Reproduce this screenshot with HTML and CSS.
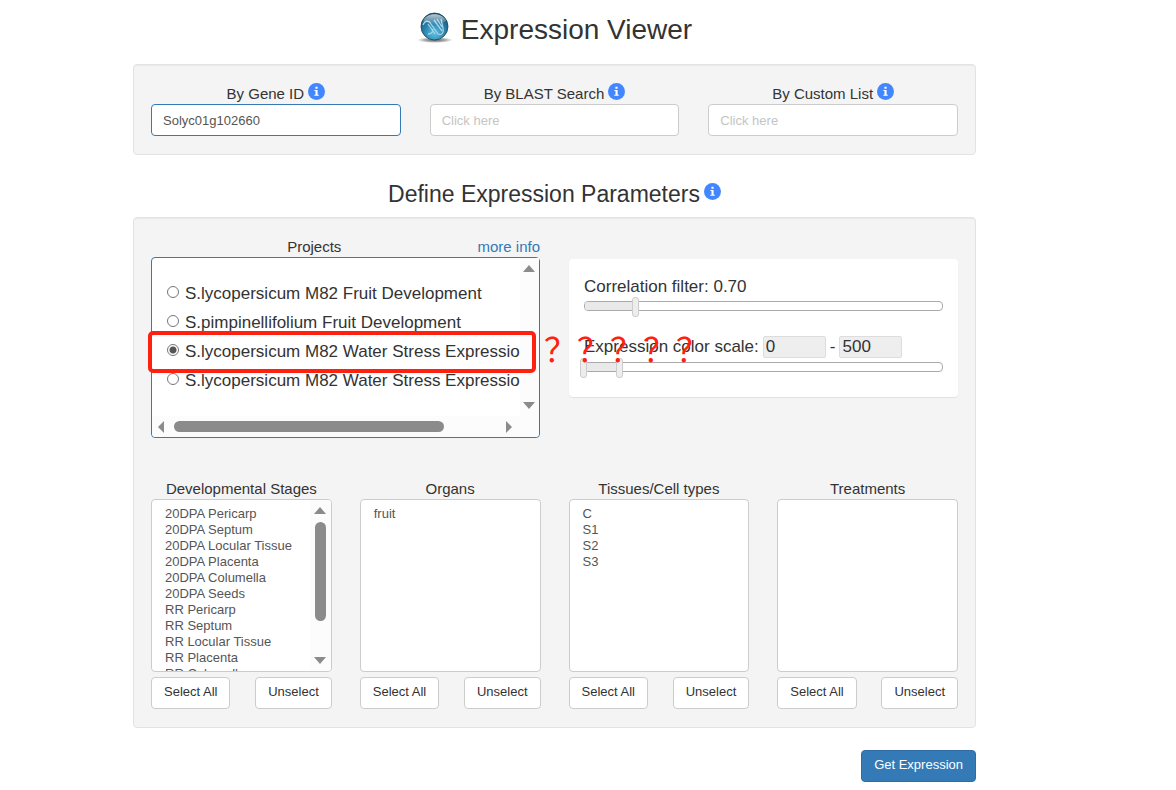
FILE: index.html
```html
<!DOCTYPE html>
<html lang="en">
<head>
<meta charset="utf-8">
<title>Expression Viewer</title>
<link rel="stylesheet" href="styles.css">
</head>
<body>
<svg class="defs" aria-hidden="true">
  <symbol id="info" viewBox="0 0 17 17">
    <circle cx="8.5" cy="8.5" r="8.5" fill="#4287ff"/>
    <path fill="#fff" d="M7.400 3.800h2.200v1.900H7.400zM6.400 7h3.200v4.700h1.200v1H6.300v-1h1.200V8h-1.100z"/>
  </symbol>
</svg>
<main class="page">
  <h1 class="title">
    <svg class="logo" viewBox="0 0 36 32" aria-hidden="true">
      <defs>
        <radialGradient id="ball" cx="50%" cy="75%" r="75%">
          <stop offset="0" stop-color="#5cbfe2"/><stop offset=".5" stop-color="#2c86b0"/><stop offset="1" stop-color="#1a4a66"/>
        </radialGradient>
        <linearGradient id="shine" x1="0" y1="0" x2="0" y2="1">
          <stop offset="0" stop-color="#fff" stop-opacity=".7"/><stop offset="1" stop-color="#fff" stop-opacity=".05"/>
        </linearGradient>
        <radialGradient id="shade"><stop offset="0" stop-color="#444" stop-opacity=".9"/><stop offset=".6" stop-color="#777" stop-opacity=".6"/><stop offset="1" stop-color="#999" stop-opacity="0"/></radialGradient>
      </defs>
      <ellipse cx="18" cy="28" rx="18" ry="3" fill="url(#shade)"/>
      <circle cx="17.500" cy="14.500" r="13.500" fill="url(#ball)" stroke="#17445c" stroke-width=".8"/>
      <path fill="none" stroke="#a5d3e6" stroke-width="1.300" d="M6 13c2-5 6-5 8-1l7 10c4 2 6-2 5-6l-2-9M11 22c4 0 5-2 5-5M11 12l7 10M17 8l8 11M20 7l5 8"/>
      <path fill="url(#shine)" d="M6 9C9 0 26 0 29 9 24 13 11 13 6 9z"/>
    </svg>
    <span>Expression Viewer</span>
  </h1>

  <form class="form">
    <section class="panel search">
      <div class="field">
        <div class="caption"><label for="gene">By Gene ID</label><svg class="info"><use href="#info"/></svg></div>
        <input class="text active" id="gene" type="text" value="Solyc01g102660">
      </div>
      <div class="field">
        <div class="caption"><label for="blast">By BLAST Search</label><svg class="info"><use href="#info"/></svg></div>
        <input class="text" id="blast" type="text" placeholder="Click here">
      </div>
      <div class="field">
        <div class="caption"><label for="custom">By Custom List</label><svg class="info"><use href="#info"/></svg></div>
        <input class="text" id="custom" type="text" placeholder="Click here">
      </div>
    </section>

    <h2 class="subtitle"><span>Define Expression Parameters</span><svg class="info"><use href="#info"/></svg></h2>

    <section class="panel params">
      <div class="halves">
        <div class="projects">
          <div class="projects-head"><span id="projects-label" class="projects-label">Projects</span><a class="more" href="#">more info</a></div>
          <div class="project-box">
            <div class="project-list" role="radiogroup" aria-labelledby="projects-label">
              <label class="project"><input type="radio" name="project"><span>S.lycopersicum M82 Fruit Development</span></label>
              <label class="project"><input type="radio" name="project"><span>S.pimpinellifolium Fruit Development</span></label>
              <label class="project"><input type="radio" name="project" checked><span>S.lycopersicum M82 Water Stress Expressio</span></label>
              <label class="project"><input type="radio" name="project"><span>S.lycopersicum M82 Water Stress Expressio</span></label>
            </div>
            <div class="vbar"><i class="up"></i><i class="down"></i></div>
            <div class="hbar"><i class="left"></i><div class="hrail"><div class="hthumb"></div></div><i class="right"></i></div>
            <div class="mark"></div>
            <div class="queries">？？？？？</div>
          </div>
        </div>
        <div class="filters">
          <label class="filter-line" for="corr">Correlation filter: 0.70</label>
          <div class="slider">
            <div class="track"><div class="fill" style="width:14.5%"></div></div>
            <input id="corr" type="range" min="0" max="200" value="29">
          </div>
          <div class="filter-line scale">
            <span>Expression color scale:</span>
            <input class="num" type="text" value="0" aria-label="Scale minimum">
            <span>-</span>
            <input class="num" type="text" value="500" aria-label="Scale maximum">
          </div>
          <div class="slider">
            <div class="track"><div class="fill" style="width:10%"></div></div>
            <input type="range" min="0" max="100" value="0" aria-label="Minimum">
            <input type="range" min="0" max="100" value="10" aria-label="Maximum">
          </div>
        </div>
      </div>

      <div class="quarters">
        <div class="group">
          <label for="stages">Developmental Stages</label>
          <div class="listbox">
            <select id="stages" multiple>
              <option>20DPA Pericarp</option><option>20DPA Septum</option><option>20DPA Locular Tissue</option><option>20DPA Placenta</option><option>20DPA Columella</option><option>20DPA Seeds</option><option>RR Pericarp</option><option>RR Septum</option><option>RR Locular Tissue</option><option>RR Placenta</option><option>RR Columella</option><option>RR Seeds</option>
            </select>
            <div class="vbar"><i class="up"></i><div class="vrail"><div class="vthumb"></div></div><i class="down"></i></div>
          </div>
          <div class="actions"><button type="button" class="btn">Select All</button><button type="button" class="btn">Unselect</button></div>
        </div>
        <div class="group">
          <label for="organs">Organs</label>
          <div class="listbox"><select id="organs" multiple><option>fruit</option></select></div>
          <div class="actions"><button type="button" class="btn">Select All</button><button type="button" class="btn">Unselect</button></div>
        </div>
        <div class="group">
          <label for="tissues">Tissues/Cell types</label>
          <div class="listbox"><select id="tissues" multiple><option>C</option><option>S1</option><option>S2</option><option>S3</option></select></div>
          <div class="actions"><button type="button" class="btn">Select All</button><button type="button" class="btn">Unselect</button></div>
        </div>
        <div class="group">
          <label for="treatments">Treatments</label>
          <div class="listbox"><select id="treatments" multiple></select></div>
          <div class="actions"><button type="button" class="btn">Select All</button><button type="button" class="btn">Unselect</button></div>
        </div>
      </div>
    </section>

    <div class="submit"><button type="submit" class="btn primary">Get Expression</button></div>
  </form>
</main>
</body>
</html>
```
FILE: styles.css
```css
* { box-sizing: border-box; }
body {
  margin: 0;
  background: #fff;
  color: #333;
  font: 15px/20px "Liberation Sans", Arial, sans-serif;
}
input, select, button { font-family: inherit; margin: 0; }
.defs { position: absolute; width: 0; height: 0; }
.page { padding: 10px 200px 8px 133px; }

.title {
  display: flex;
  justify-content: center;
  gap: 8px;
  margin: 0 0 14px;
  font-size: 28px;
  line-height: 40px;
  font-weight: 400;
}
.logo { width: 36px; height: 32px; margin-top: 2px; }
.info { width: 17px; height: 17px; flex: none; }

.panel {
  background: #f4f4f4;
  border: 1px solid #e3e3e3;
  border-radius: 4px;
  padding: 18px 17px;
  box-shadow: inset 0 1px 1px rgba(0, 0, 0, .05);
}
.search { display: grid; grid-template-columns: repeat(3, 1fr); gap: 29px; }
.caption {
  display: flex;
  justify-content: center;
  gap: 4px;
  height: 21px;
  line-height: 22px;
}
.text {
  display: block;
  width: 100%;
  height: 32px;
  padding: 0 11px;
  border: 1px solid #ccc;
  border-radius: 4px;
  background: #fff;
  color: #555;
  font-size: 13px;
  outline: 0;
}
.text.active { border-color: #337ab7; }
.text::placeholder { color: #c4c4c4; opacity: 1; }

.subtitle {
  display: flex;
  justify-content: center;
  gap: 4px;
  margin: 24px 0 8px;
  font-size: 23px;
  line-height: 30px;
  font-weight: 400;
}
.subtitle .info { margin-top: 4px; }

.halves { display: grid; grid-template-columns: 1fr 1fr; gap: 29px; align-items: start; }
.projects-head { display: flex; height: 21px; line-height: 22px; }
.projects-label { flex: 1; text-align: center; }
.more { color: #337ab7; text-decoration: none; }
.project-box {
  position: relative;
  display: grid;
  grid-template-columns: 1fr 19px;
  grid-template-rows: 158px 21px;
  border: 1px solid #337ab7;
  border-radius: 4px;
  background: #fff;
}
.project-list {
  padding: 21px 0 0 15px;
  overflow: hidden;
}
.project {
  display: flex;
  align-items: center;
  gap: 6px;
  height: 29px;
  font-size: 17px;
  white-space: nowrap;
}
.project input {
  appearance: none;
  flex: none;
  width: 12px;
  height: 12px;
  margin-bottom: 4px;
  border: 1px solid #767676;
  border-radius: 50%;
  background: #fff;
}
.project input:checked { background: radial-gradient(circle, #555 0 3px, #fff 4px); }

.vbar {
  display: flex;
  flex-direction: column;
  align-items: center;
  justify-content: space-between;
  gap: 8px;
  padding: 7px 2px 7px 0;
  background: #fcfcfc;
}
.hbar {
  grid-column: 1 / 3;
  display: flex;
  align-items: center;
  gap: 10px;
  padding: 0 27px 0 6px;
  background: #fcfcfc;
  border-radius: 0 0 4px 4px;
}
.hrail { flex: 1; }
.hthumb { width: 84%; height: 11px; border-radius: 6px; background: #8b8b8b; }
.vrail { flex: 1; }
.vthumb { width: 11px; height: 99px; border-radius: 6px; background: #8b8b8b; }
.up, .down { border: 6px solid transparent; }
.up { border-top: 0; border-bottom: 7px solid #8b8b8b; }
.down { border-bottom: 0; border-top: 7px solid #8b8b8b; }
.left, .right { border: 6px solid transparent; }
.left { border-left: 0; border-right: 6px solid #8b8b8b; }
.right { border-right: 0; border-left: 6px solid #8b8b8b; }

.mark {
  position: absolute;
  top: 73px;
  left: -4px;
  right: 3px;
  height: 42px;
  border: 4px solid #ff2010;
  border-radius: 5px;
  pointer-events: none;
}
.queries {
  position: absolute;
  top: 69px;
  left: 100%;
  z-index: 2;
  padding-left: 5px;
  color: #ff2010;
  font: 400 33px/42px "Noto Sans CJK SC", sans-serif;
  white-space: nowrap;
  pointer-events: none;
}

.filters {
  margin-top: 23px;
  padding: 18px 15px 20px;
  border-radius: 4px;
  background: #fff;
  box-shadow: 0 1px 1px rgba(0, 0, 0, .08);
}
.filter-line { display: block; font-size: 17px; line-height: 20px; }
.slider { position: relative; padding: 4px 0 5px; }
.track {
  height: 10px;
  border: 1px solid #aaa;
  border-radius: 4px;
  background: #fff;
  overflow: hidden;
}
.fill { height: 100%; background: #e9e9e9; }
.slider input {
  appearance: none;
  position: absolute;
  top: 0;
  left: -4px;
  width: calc(100% + 8px);
  height: 20px;
  background: none;
  pointer-events: none;
}
.slider input::-webkit-slider-thumb {
  appearance: none;
  width: 7px;
  height: 20px;
  border: 1px solid #ccc;
  border-radius: 3px;
  background: #ededed;
  pointer-events: auto;
}
.scale { display: flex; align-items: center; gap: 4px; margin-top: 20px; }
.num {
  width: 63px;
  height: 22px;
  padding: 0 2px;
  border: 1px solid #ddd;
  border-radius: 2px;
  background: #eee;
  color: #333;
  font-size: 17px;
}

.quarters {
  display: grid;
  grid-template-columns: repeat(4, 1fr);
  gap: 28px;
  margin-top: 41px;
}
.group label { display: block; text-align: center; }
.listbox {
  display: flex;
  height: 173px;
  border: 1px solid #ccc;
  border-radius: 4px;
  background: #fff;
  overflow: hidden;
}
.listbox select {
  flex: 1;
  min-width: 0;
  padding: 6px 0 0 11px;
  border: 0;
  background: none;
  color: #555;
  font-size: 13px;
  outline: 0;
  scrollbar-width: none;
  overflow: hidden;
}
.listbox .vbar { width: 21px; padding-right: 0; }
.actions { display: flex; justify-content: space-between; margin-top: 5px; }
.btn {
  height: 32px;
  padding: 0 12px 4px;
  border: 1px solid #ccc;
  border-radius: 4px;
  background: #fff;
  color: #333;
  font-size: 13px;
}
.submit { display: flex; justify-content: flex-end; margin-top: 22px; }
.primary { border-color: #2e6da4; background: #337ab7; color: #fff; }
```
